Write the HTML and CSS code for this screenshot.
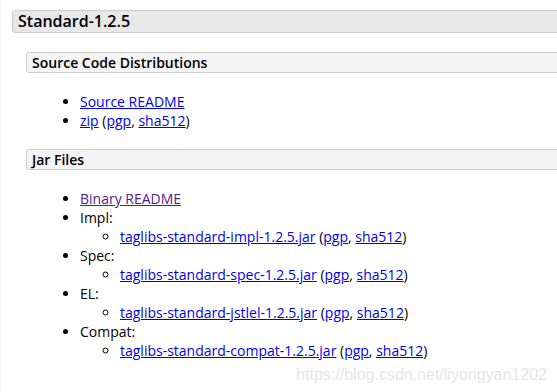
FILE: index.html
```html
<!DOCTYPE html>
<html lang="en">
<head>
    <meta charset="UTF-8">
    <title>Standard-1.2.5</title>
    <link rel="stylesheet" href="styles.css">
</head>
<body>
    <div class="page">
        <h2>Standard-1.2.5</h2>
        <div class="section">
            <h3>Source Code Distributions</h3>
            <ul>
                <li><a href="#">Source README</a></li>
                <li><a href="#">zip</a> (<a href="#">pgp</a>, <a href="#">sha512</a>)</li>
            </ul>
            <h3>Jar Files</h3>
            <ul>
                <li><a href="#" class="visited">Binary README</a></li>
                <li>Impl:
                    <ul>
                        <li><a href="#">taglibs-standard-impl-1.2.5.jar</a> (<a href="#">pgp</a>, <a href="#">sha512</a>)</li>
                    </ul>
                </li>
                <li>Spec:
                    <ul>
                        <li><a href="#">taglibs-standard-spec-1.2.5.jar</a> (<a href="#">pgp</a>, <a href="#">sha512</a>)</li>
                    </ul>
                </li>
                <li>EL:
                    <ul>
                        <li><a href="#">taglibs-standard-jstlel-1.2.5.jar</a> (<a href="#">pgp</a>, <a href="#">sha512</a>)</li>
                    </ul>
                </li>
                <li>Compat:
                    <ul>
                        <li><a href="#">taglibs-standard-compat-1.2.5.jar</a> (<a href="#">pgp</a>, <a href="#">sha512</a>)</li>
                    </ul>
                </li>
            </ul>
        </div>
    </div>
    <div class="watermark">https://blog.csdn.net/liyongyan1202</div>
</body>
</html>
```

FILE: styles.css
```css
html, body {
    margin: 0;
    height: 100%;
    overflow: hidden;
}
body {
    font-family: "Open Sans", Arial, sans-serif;
    font-size: 14px;
    line-height: 19px;
    color: #000;
    background: #fff;
    border-left: 1px solid #f0f0f0;
    position: relative;
}
.page {
    padding: 10px 0 0 11px;
    margin-right: -20px;
}
h2 {
    margin: 0;
    padding: 0 5px;
    height: 21px;
    line-height: 21px;
    font-size: 16px;
    font-weight: 600;
    background: #e8e8e8;
    border: 1px solid #ccc;
    border-radius: 3px;
}
.section {
    margin-left: 14px;
}
h3 {
    margin: 19px 0 0 0;
    padding: 0 5px;
    height: 19px;
    line-height: 19px;
    font-size: 14px;
    font-weight: 600;
    background: #f4f4f4;
    border: 1px solid #ccc;
    border-radius: 3px;
}
ul {
    margin: 19px 0 19px 0;
    padding-left: 54px;
}
ul ul {
    margin: 0;
    padding-left: 40px;
}
a {
    color: #0000ee;
}
a.visited {
    color: #551a8b;
}
.watermark {
    position: absolute;
    right: 10px;
    bottom: 8px;
    font-family: "Liberation Sans", Arial, sans-serif;
    font-size: 16px;
    color: #e6e6e6;
}
```
